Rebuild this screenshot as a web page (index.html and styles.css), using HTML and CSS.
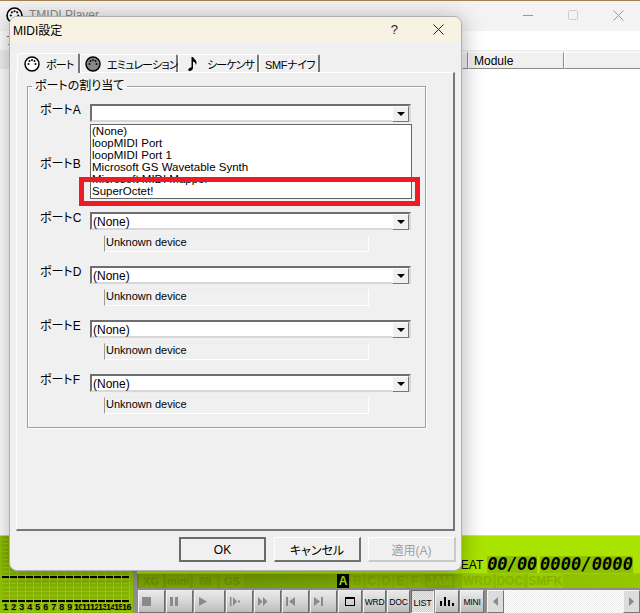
FILE: index.html
```html
<!DOCTYPE html>
<html lang="ja">
<head>
    <meta charset="UTF-8">
    <title>MIDI設定</title>
    <link rel="stylesheet" href="styles.css">
</head>
<body>

<div class="app">
    <div class="app-title">
        <svg class="din" width="17" height="17" viewBox="0 0 16 16"><use href="#din-dots"/></svg>
        <span class="app-name">TMIDI Player</span>
        <span class="winbtns">
            <svg width="11" height="11" viewBox="0 0 11 11"><path d="M0 5.5h10" stroke="#999"/></svg>
            <svg width="11" height="11" viewBox="0 0 11 11"><rect x=".5" y=".5" width="9" height="9" rx="1" fill="none" stroke="#ccc"/></svg>
            <svg width="11" height="11" viewBox="0 0 11 11"><path d="M.5.5l10 10M10.500.5l-10 10" stroke="#999"/></svg>
        </span>
    </div>
    <div class="app-menu">フ</div>
    <div class="list-head">
        <span class="hcell hcell-fill"></span>
        <span class="hcell hcell-mod">Module</span>
        <span class="hcell hcell-end"></span>
    </div>
    <div class="list-body"></div>

    <div class="panel">
        <div class="meter">
            <div class="meter-cols">
                <span>1</span><span>2</span><span>3</span><span>4</span><span>5</span><span>6</span><span>7</span><span>8</span>
                <span>9</span><span>10</span><span>11</span><span>12</span><span>13</span><span>14</span><span>15</span><span>16</span>
            </div>
        </div>
        <div class="panel-right">
            <div class="display">
                <span class="eat">EAT</span>
                <span class="lcd lcd-a">00/00</span>
                <span class="lcd lcd-b">0000/0000</span>
            </div>
            <div class="lamps">
                <span class="lamp lamp-logo">XG</span>
                <span class="lamp lamp-logo">midi</span>
                <span class="lamp lamp-logo">88</span>
                <span class="lamp lamp-logo">GS</span>
                <span class="lamp-gap"></span>
                <span class="lamp lamp-port on">A</span>
                <span class="lamp lamp-port">B</span>
                <span class="lamp lamp-port">C</span>
                <span class="lamp lamp-port">D</span>
                <span class="lamp lamp-port">E</span>
                <span class="lamp lamp-port">F</span>
                <span class="lamp lamp-jam">JAM</span>
                <span class="lamp lamp-wrd">WRD</span>
                <span class="lamp lamp-doc">DOC</span>
                <span class="lamp lamp-smfk">SMFK</span>
            </div>
            <div class="tools">
                <span class="tbtn tbtn-ico w27"><svg width="10" height="10" viewBox="0 0 10 10"><rect width="9" height="9" fill="#8a8a8a"/></svg></span>
                <span class="tbtn tbtn-ico w27"><svg width="10" height="10" viewBox="0 0 10 10"><path d="M0 0h3v9H0zM5 0h3v9H5z" fill="#8a8a8a"/></svg></span>
                <span class="tbtn tbtn-ico w31"><svg width="10" height="10" viewBox="0 0 10 10"><path d="M1 0l8 4.500-8 4.500z" fill="#8a8a8a"/></svg></span>
                <span class="tbtn tbtn-ico w27"><svg width="10" height="10" viewBox="0 0 10 10"><path d="M0 0h1.500v9H0zM3 0l4 4.500-4 4.500zM8 3.500h2v2H8z" fill="#8a8a8a"/></svg></span>
                <span class="tbtn tbtn-ico w27"><svg width="10" height="10" viewBox="0 0 10 10"><path d="M0 0l4.500 4.500L0 9zM5 0l4.500 4.500L5 9z" fill="#8a8a8a"/></svg></span>
                <span class="tbtn tbtn-ico w27"><svg width="10" height="10" viewBox="0 0 10 10"><path d="M0 0h2v9H0zM9 0v9L3 4.500z" fill="#8a8a8a"/></svg></span>
                <span class="tbtn tbtn-ico w27"><svg width="10" height="10" viewBox="0 0 10 10"><path d="M0 0l6 4.500-6 4.500zM7 0h2v9H7z" fill="#8a8a8a"/></svg></span>
                <span class="tbtn w24"><svg width="11" height="10" viewBox="0 0 11 10"><rect x=".5" y=".5" width="9" height="8" fill="none" stroke="#000"/><path d="M0 1h10" stroke="#000" stroke-width="2"/></svg></span>
                <span class="tbtn w23">WRD</span>
                <span class="tbtn w23">DOC</span>
                <span class="tbtn w23 tbtn-down">LIST</span>
                <span class="tbtn w24"><svg width="15" height="10" viewBox="0 0 15 10"><path d="M0 4h2v5H0zM4 0h2v9H4zM8 3h2v6H8zM12 6h2v3h-2z" fill="#000"/></svg></span>
                <span class="tbtn w24">MINI</span>
                <div class="hscroll">
                    <span class="sbtn"><svg width="6" height="9" viewBox="0 0 6 9"><path d="M5 0v9L0 4.500z" fill="#8a8a8a"/></svg></span>
                    <span class="strack"></span>
                    <span class="sbtn"><svg width="6" height="9" viewBox="0 0 6 9"><path d="M0 0v9l5-4.500z" fill="#8a8a8a"/></svg></span>
                </div>
            </div>
        </div>
    </div>
</div>

<div class="dialog">
    <div class="dlg-title">
        <span class="dlg-name">MIDI設定</span>
        <span class="dlg-help">?</span>
        <svg class="dlg-close" width="11" height="11" viewBox="0 0 11 11"><path d="M.5.500l10 10M10.500.500l-10 10" stroke="#222"/></svg>
    </div>
    <div class="dlg-body">
        <div class="tabs">
            <span class="tab tab-on t1">
                <svg class="din" width="16" height="16" viewBox="0 0 16 16"><use href="#din-dots"/></svg>ポート
            </span>
            <span class="tab t2">
                <svg class="din" width="16" height="16" viewBox="0 0 16 16"><circle cx="8" cy="8" r="7" fill="#888" stroke="#000" stroke-width="1.500"/><g fill="#111"><circle cx="4.500" cy="8" r="1"/><circle cx="5.500" cy="5" r="1"/><circle cx="8" cy="4" r="1"/><circle cx="10.500" cy="5" r="1"/><circle cx="11.500" cy="8" r="1"/></g></svg>エミュレーション
            </span>
            <span class="tab t3">
                <svg class="note" width="10" height="16" viewBox="0 0 10 16"><path d="M3.500 1h1.500c.5 2 3 2.500 3.500 5 .2 1 0 2-.7 3 0-2-1-3-2.800-3.500V12c0 1.500-1.500 3-3.500 3C.300 15 0 14 .5 13c.5-1 1.700-1.600 3-1.500z" fill="#000"/></svg>シーケンサ
            </span>
            <span class="tab t4">SMFナイフ</span>
        </div>
        <div class="tab-page">
            <fieldset class="group">
                <legend>ポートの割り当て</legend>

                <div class="port">
                    <span class="port-label">ポートA</span>
                    <div class="combo"><span class="combo-text"></span><span class="combo-btn"></span></div>
                </div>
                <div class="port">
                    <span class="port-label">ポートB</span>
                    <div class="combo"><span class="combo-text">(None)</span><span class="combo-btn"></span></div>
                    <div class="device">Unknown device</div>
                </div>
                <div class="port">
                    <span class="port-label">ポートC</span>
                    <div class="combo"><span class="combo-text">(None)</span><span class="combo-btn"></span></div>
                    <div class="device">Unknown device</div>
                </div>
                <div class="port">
                    <span class="port-label">ポートD</span>
                    <div class="combo"><span class="combo-text">(None)</span><span class="combo-btn"></span></div>
                    <div class="device">Unknown device</div>
                </div>
                <div class="port">
                    <span class="port-label">ポートE</span>
                    <div class="combo"><span class="combo-text">(None)</span><span class="combo-btn"></span></div>
                    <div class="device">Unknown device</div>
                </div>
                <div class="port">
                    <span class="port-label">ポートF</span>
                    <div class="combo"><span class="combo-text">(None)</span><span class="combo-btn"></span></div>
                    <div class="device">Unknown device</div>
                </div>
            </fieldset>
        </div>
        <div class="dlg-buttons">
            <button class="btn btn-default">OK</button>
            <button class="btn">キャンセル</button>
            <button class="btn btn-off">適用(A)</button>
        </div>
    </div>
</div>

<ul class="dropdown">
    <li>(None)</li>
    <li>loopMIDI Port</li>
    <li>loopMIDI Port 1</li>
    <li>Microsoft GS Wavetable Synth</li>
    <li>Microsoft MIDI Mapper</li>
    <li>SuperOctet!</li>
</ul>
<div class="mark"></div>

<svg class="defs" width="0" height="0">
    <symbol id="din-dots" viewBox="0 0 16 16">
        <circle cx="8" cy="8" r="7" fill="#fff" stroke="#000" stroke-width="1.500"/>
        <g fill="#000">
            <circle cx="4.500" cy="8" r="1"/><circle cx="5.500" cy="5" r="1"/><circle cx="8" cy="4" r="1"/>
            <circle cx="10.500" cy="5" r="1"/><circle cx="11.500" cy="8" r="1"/>
        </g>
    </symbol>
</svg>

</body>
</html>
```

FILE: styles.css
```css
html, body { margin: 0; height: 100%; overflow: hidden; }
body { position: relative; width: 640px; height: 613px; font-family: "Liberation Sans", "Noto Sans CJK JP", sans-serif; font-size: 12px; font-feature-settings: "palt"; color: #000; background: #fff; }

/* main window */
.app { display: flex; flex-direction: column; height: 613px; border-top: 1px solid #a58350; box-sizing: border-box; }
.app-title { display: flex; align-items: center; height: 30px; flex: none; padding: 0 0 2px 6px; box-sizing: border-box; background: #f3f3f3; }
.app-name { margin-left: 6px; font-size: 12px; color: #8a8a8a; }
.winbtns { display: flex; gap: 34px; margin-left: auto; margin-right: 16px; }
.app-menu { height: 19px; flex: none; padding-left: 6px; background: #fff; color: #777; }
.list-head { display: flex; justify-content: flex-end; height: 19px; flex: none; padding-top: 2px; box-sizing: border-box; background: #f0f0f0; }
.hcell { box-sizing: border-box; height: 17px; background: #f0f0f0; border: 1px solid #8c8c8c; border-top-color: #fff; border-left-color: #fff; line-height: 16px; }
.hcell-fill { width: 6px; }
.hcell-mod { width: 96px; padding-left: 5px; }
.hcell-end { width: 76px; border-right: none; }
.list-body { flex: 1; background: #fff; }

/* green panel */
.panel { display: flex; height: 78px; flex: none; background: #9bd200; border-top: 1px solid #cfcfcf; box-sizing: border-box; }
.meter { width: 133px; flex: none; box-sizing: border-box; padding: 0 3px 0 2px; background: #8fc000; }
.meter-cols { display: grid; grid-template-columns: repeat(16, 8px); height: 100%; }
.meter-cols span { position: relative; display: block; height: 100%; box-sizing: border-box; padding-top: 66px; font-size: 9px; line-height: 10px; font-weight: bold; text-align: center; letter-spacing: -.5px; border-right: 1px solid #9ccb10; background: repeating-linear-gradient(#86b400 0 3px, #9ac600 3px 4px); }
.meter-cols span::before { content: ""; position: absolute; left: 0; right: 0; top: 40px; height: 2px; background: #000; }
.meter-cols span::after { content: ""; position: absolute; left: 0; right: 0; top: 64px; height: 2px; background: #000; }
.panel-right { flex: 1; display: flex; flex-direction: column; border-left: 4px solid #8e8e8e; min-width: 0; }
.display { display: flex; align-items: flex-end; justify-content: flex-end; height: 37px; flex: none; padding-right: 7px; box-sizing: border-box; background: #a9e400; }
.eat { margin-right: 4px; margin-bottom: 1px; font-size: 12px; }
.lcd { font-family: "DejaVu Sans Mono", monospace; font-size: 17px; font-weight: bold; font-style: italic; line-height: 17px; white-space: nowrap; background: #8cc000; }
.lcd-a { margin-right: 3px; letter-spacing: -.3px; }
.lcd-b { letter-spacing: .1px; }
.lamps { display: flex; align-items: stretch; gap: 1px; height: 14px; flex: none; margin-top: 1px; background: linear-gradient(90deg, #6d9600, #95c800); font-size: 12px; font-weight: bold; line-height: 14px; color: #86ad00; }
.lamp { display: block; text-align: center; background: #7da600; }
.lamp-logo { width: 24px; margin-left: 2px; font-size: 11px; color: #6a9200; }
.lamp-gap { width: 91px; }
.lamp-port { width: 12px; margin-right: 1.300px; background: #8ab500; color: #7da600; }
.lamp-port.on { background: #000; color: #a9e400; }
.lamp-jam { width: 30px; margin-left: 2px; background: #7fa900; color: #8db900; }
.lamp-wrd { width: 31px; margin-left: 6px; background: #94c600; color: #85b100; }
.lamp-doc { width: 28px; margin-left: 2px; background: #94c600; color: #85b100; }
.lamp-smfk { width: 35px; margin-left: 3px; margin-right: auto; background: #98cc00; color: #85b100; }
.tools { display: flex; flex: 1; gap: 1px; padding: 2px 0 0 1px; background: #8c8c8c; }
.tbtn { display: flex; align-items: center; justify-content: center; box-sizing: border-box; height: 23px; font-size: 8.500px; letter-spacing: -.2px; background: linear-gradient(#ececec, #bdbdbd); border: 1px solid #f4f4f4; border-right-color: #6e6e6e; border-bottom-color: #6e6e6e; }
.tbtn-ico { justify-content: flex-start; padding-left: 3px; }
.tbtn-down { background: repeating-conic-gradient(#e8e8e8 0 25%, #d0d0d0 0 50%) 0 0 / 2px 2px; border-color: #6e6e6e #f4f4f4 #f4f4f4 #6e6e6e; padding-top: 3px; font-size: 9px; }
.w23 { width: 23px; }
.w24 { width: 24px; }
.w27 { width: 27px; }
.w31 { width: 31px; }
.hscroll { display: flex; flex: 1; margin-left: 2px; }
.sbtn { display: flex; align-items: center; justify-content: center; box-sizing: border-box; width: 17px; height: 23px; flex: none; background: #dcdcdc; border: 1px solid #f6f6f6; border-right-color: #777; border-bottom-color: #777; }
.strack { flex: 1; background: repeating-conic-gradient(#fff 0 25%, #ececec 0 50%) 0 0 / 2px 2px; }

/* dialog, a window over the main one */
.dialog { position: absolute; left: 9px; top: 16px; width: 453px; height: 555px; box-sizing: border-box; display: flex; flex-direction: column; border: 1px solid #b0b0b0; border-radius: 8px; background: #f0f0f0; box-shadow: 0 3px 22px rgba(0, 0, 0, .32); overflow: hidden; }
.dlg-title { display: flex; align-items: center; height: 25px; flex: none; padding: 0 17px 0 2px; background: #f7f2e1; }
.dlg-name { margin-right: auto; padding-left: 1px; }
.dlg-help { margin-right: 35px; font-size: 13px; color: #222; }
.dlg-body { flex: 1; position: relative; display: flex; flex-direction: column; padding: 10px 5px 8px 6px; }
.tabs { display: flex; height: 20px; flex: none; align-items: flex-end; padding-left: 1px; }
.tab { display: flex; align-items: center; box-sizing: border-box; height: 18px; font-size: 11px; letter-spacing: -.8px; background: #f0f0f0; border: 1px solid #fff; border-bottom: none; border-right: 2px solid #777; border-radius: 2px 2px 0 0; white-space: nowrap; }
.tab-on { height: 20px; position: relative; top: 1px; z-index: 1; }
.t1 { width: 63px; padding-left: 6px; gap: 6px; }
.t2 { width: 98px; padding-left: 4px; gap: 6px; }
.t3 { width: 81px; padding-left: 9px; gap: 9px; }
.t4 { width: 61px; padding-left: 5px; letter-spacing: -.4px; }
.din, .note { flex: none; }
.tab-page { flex: 1; box-sizing: border-box; padding: 6px 27px 0 10px; margin-right: 1px; border: 1px solid #fff; border-right: 2px solid #777; border-bottom: 2px solid #777; }
.group { box-sizing: border-box; height: 349px; margin: 0; padding: 10px 0 0 12px; border: 1px solid #a0a0a0; box-shadow: 1px 1px 0 #fff, inset 1px 1px 0 #fff; }
.group legend { padding: 0 3px; margin-left: -8px; line-height: 15px; font-size: 12px; }
.port { position: relative; height: 54px; display: grid; grid-template-columns: 50px 321px; grid-template-rows: 18px 17px; row-gap: 5px; align-content: start; }
.port-label { line-height: 12px; }
.combo { display: flex; box-sizing: border-box; height: 18px; background: #fff; border: 2px solid #6e6e6e; border-right-color: #d8d8d8; border-bottom-color: #d8d8d8; }
.combo-text { flex: 1; padding-left: 1px; line-height: 17px; }
.combo-btn { position: relative; width: 17px; height: 16px; background: #f0f0f0; box-sizing: border-box; border: 1px solid #fff; border-right-color: #777; border-bottom-color: #777; }
.combo-btn::after { content: ""; position: absolute; left: 4px; top: 5px; border: 4px solid transparent; border-top: 4px solid #000; border-bottom: none; }
.device { grid-column: 2; margin-left: 14px; width: 265px; box-sizing: border-box; padding-left: 1px; line-height: 13px; font-size: 11px; background: #f0f0f0; border: 1px solid #fff; border-left-color: #999; border-top-color: #ececec; }
.dlg-buttons { display: flex; justify-content: flex-end; gap: 7px; flex: none; padding: 6px 0 0; }
.btn { box-sizing: border-box; width: 87px; height: 25px; padding: 0; font: 12px "Liberation Sans", "Noto Sans CJK JP", sans-serif; font-feature-settings: "palt"; background: #f0f0f0; border: 1px solid #fff; border-right: 2px solid #707070; border-bottom: 2px solid #707070; }
.btn-default { margin-right: 1px; border: 2px solid #6a6a6a; }
.btn-off { width: 88px; color: #a0a0a0; border-color: #fff #c8c8c8 #c8c8c8 #fff; }

/* open combo list and the red marker lie over the dialog */
.dropdown { position: absolute; left: 90px; top: 124px; width: 322px; height: 75px; box-sizing: border-box; margin: 0; padding: 0 0 0 1px; list-style: none; background: #fff; border: 1px solid #646464; font-size: 11.500px; line-height: 12px; }
.mark { position: absolute; left: 79px; top: 177px; width: 341px; height: 29px; box-sizing: border-box; border: 5px solid #ed1c24; }
.defs { position: absolute; }
```
